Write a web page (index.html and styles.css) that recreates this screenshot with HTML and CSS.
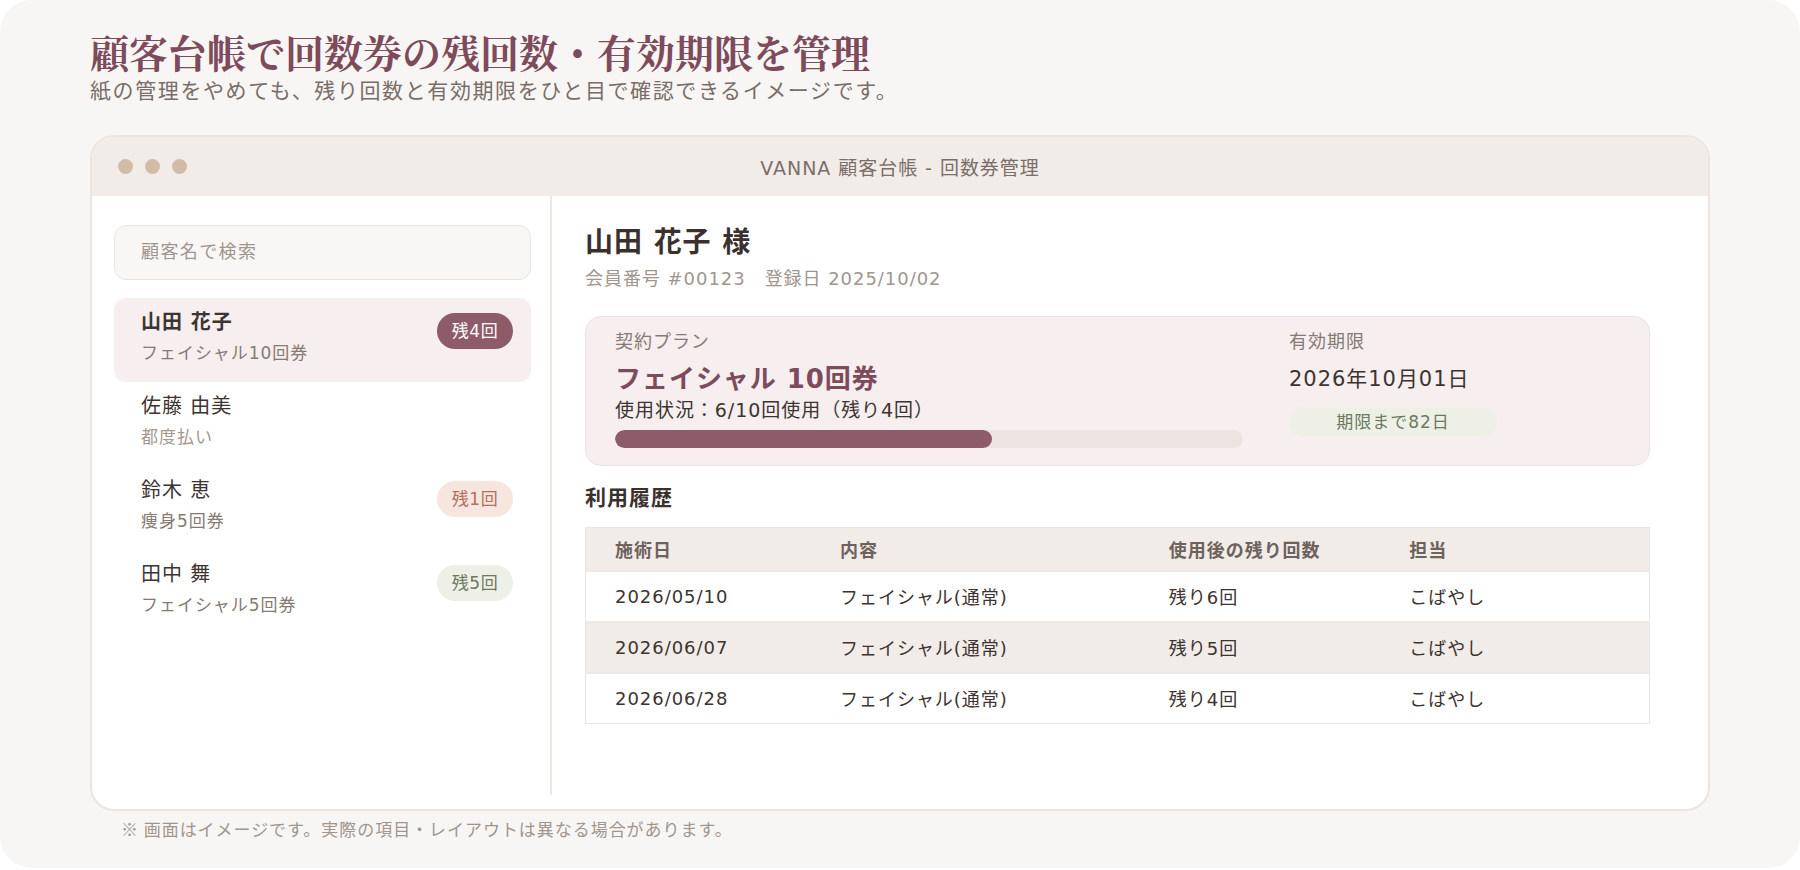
FILE: index.html
```html
<!DOCTYPE html>
<html lang="ja">
<head>
    <meta charset="UTF-8">
    <meta name="viewport" content="width=device-width, initial-scale=1.0">
    <title>顧客台帳 回数券管理</title>
    <link rel="stylesheet" href="styles.css">
</head>
<body>
    <div class="page">
        <h1 class="title">顧客台帳で回数券の残回数・有効期限を管理</h1>
        <p class="lead">紙の管理をやめても、残り回数と有効期限をひと目で確認できるイメージです。</p>

        <div class="window">
            <div class="titlebar">
                <div class="dots"><span></span><span></span><span></span></div>
                <div class="wintitle">VANNA 顧客台帳 - 回数券管理</div>
            </div>

            <div class="winbody">
                <aside class="sidebar">
                    <div class="search">顧客名で検索</div>
                    <ul class="clients">
                        <li class="current">
                            <div class="info">
                                <div class="name">山田 花子</div>
                                <div class="plan">フェイシャル10回券</div>
                            </div>
                            <span class="badge badge-main">残4回</span>
                        </li>
                        <li>
                            <div class="info">
                                <div class="name">佐藤 由美</div>
                                <div class="plan plan-light">都度払い</div>
                            </div>
                        </li>
                        <li>
                            <div class="info">
                                <div class="name">鈴木 恵</div>
                                <div class="plan">痩身5回券</div>
                            </div>
                            <span class="badge badge-warn">残1回</span>
                        </li>
                        <li>
                            <div class="info">
                                <div class="name">田中 舞</div>
                                <div class="plan">フェイシャル5回券</div>
                            </div>
                            <span class="badge badge-ok">残5回</span>
                        </li>
                    </ul>
                </aside>

                <main class="detail">
                    <h2 class="customer">山田 花子 様</h2>
                    <div class="meta"><span>会員番号 #00123</span><span>登録日 2025/10/02</span></div>

                    <div class="card">
                        <div class="card-col">
                            <div class="label">契約プラン</div>
                            <div class="plan-name">フェイシャル 10回券</div>
                            <div class="usage">使用状況：6/10回使用（残り4回）</div>
                            <div class="bar"><div class="bar-fill" style="width: 60%"></div></div>
                        </div>
                        <div class="card-col">
                            <div class="label">有効期限</div>
                            <div class="expire">2026年10月01日</div>
                            <div class="days">期限まで82日</div>
                        </div>
                    </div>

                    <h3 class="section">利用履歴</h3>
                    <table class="history">
                        <thead>
                            <tr>
                                <th class="c-date">施術日</th>
                                <th class="c-menu">内容</th>
                                <th class="c-left">使用後の残り回数</th>
                                <th>担当</th>
                            </tr>
                        </thead>
                        <tbody>
                            <tr>
                                <td>2026/05/10</td>
                                <td>フェイシャル(通常)</td>
                                <td>残り6回</td>
                                <td>こばやし</td>
                            </tr>
                            <tr>
                                <td>2026/06/07</td>
                                <td>フェイシャル(通常)</td>
                                <td>残り5回</td>
                                <td>こばやし</td>
                            </tr>
                            <tr>
                                <td>2026/06/28</td>
                                <td>フェイシャル(通常)</td>
                                <td>残り4回</td>
                                <td>こばやし</td>
                            </tr>
                        </tbody>
                    </table>
                </main>
            </div>
        </div>

        <p class="note">※ 画面はイメージです。実際の項目・レイアウトは異なる場合があります。</p>
    </div>
</body>
</html>
```

FILE: styles.css
```css
* {
    padding: 0;
    margin: 0;
    box-sizing: border-box;
}

body {
    background: #fff;
    font-family: "DejaVu Sans", "Noto Sans CJK JP", sans-serif;
    letter-spacing: 0.06em;
    color: #3d3431;
}

ul {
    list-style: none;
}

.page {
    width: 1800px;
    height: 868px;
    background: #f8f6f4;
    border-radius: 32px;
    padding: 25px 90px 0 90px;
}

.title {
    font-family: "Noto Serif CJK JP", "Noto Sans CJK JP", serif;
    font-size: 39px;
    line-height: 52px;
    font-weight: 700;
    letter-spacing: 0;
    color: #7d4b5c;
}

.lead {
    font-size: 21px;
    letter-spacing: 1.6px;
    line-height: 28px;
    color: #786d68;
}

/* window */
.window {
    margin-top: 30px;
    height: 676px;
    background: #fff;
    border: 2px solid #ece4de;
    border-radius: 24px;
    overflow: hidden;
    display: flex;
    flex-direction: column;
}

.titlebar {
    height: 59px;
    flex: none;
    background: #f2ece8;
    display: grid;
    grid-template-columns: 1fr auto 1fr;
    align-items: center;
    padding: 0 26px;
}

.dots {
    display: flex;
    gap: 12px;
}

.dots span {
    width: 15px;
    height: 15px;
    border-radius: 50%;
    background: #d2bca7;
}

.wintitle {
    font-size: 19px;
    color: #7a6e69;
}

.winbody {
    flex: 1;
    display: flex;
    padding-bottom: 14px;
}

/* sidebar */
.sidebar {
    width: 460px;
    flex: none;
    border-right: 2px solid #eee7e1;
    padding: 29px 19px 0 22px;
}

.search {
    height: 55px;
    border: 1.5px solid #ece4de;
    border-radius: 12px;
    background: #f9f7f5;
    padding-left: 26px;
    font-size: 18px;
    letter-spacing: 1.4px;
    line-height: 52px;
    color: #a0958f;
}

.clients {
    margin-top: 18px;
}

.clients li {
    height: 84px;
    border-radius: 12px;
    padding: 10px 18px 0 27px;
    display: flex;
    justify-content: space-between;
    align-items: flex-start;
}

.clients li.current {
    background: #f6eeef;
}

.clients .name {
    font-size: 20px;
    line-height: 28px;
    color: #3d3431;
}

.clients li.current .name {
    font-weight: 700;
}

.clients .plan {
    font-size: 17px;
    line-height: 24px;
    margin-top: 5px;
    color: #857a74;
}

.clients .plan-light {
    color: #a3978f;
}

.badge {
    margin-top: 5px;
    height: 36px;
    width: 76px;
    border-radius: 18px;
    font-size: 17px;
    letter-spacing: 0.5px;
    line-height: 36px;
    text-align: center;
}

.badge-main {
    background: #8d5b69;
    color: #fff;
}

.badge-warn {
    background: #f7e6df;
    color: #b3705f;
}

.badge-ok {
    background: #eef0e8;
    color: #6c7a5d;
}

/* detail */
.detail {
    flex: 1;
    padding: 27px 58px 0 33px;
}

.customer {
    font-size: 28px;
    line-height: 40px;
    font-weight: 700;
    color: #3a312e;
}

.meta {
    margin-top: 3px;
    font-size: 18px;
    line-height: 26px;
    color: #a0958f;
}

.meta span + span {
    margin-left: 19px;
}

.card {
    margin-top: 24px;
    height: 150px;
    background: #f6eeef;
    border: 1.5px solid #eee3e2;
    border-radius: 16px;
    padding: 13px 30px 0 29px;
    display: grid;
    grid-template-columns: 1fr 330px;
    gap: 46px;
}

.label {
    font-size: 18px;
    line-height: 24px;
    color: #857a74;
}

.plan-name {
    margin-top: 7px;
    font-size: 26px;
    line-height: 36px;
    font-weight: 700;
    color: #7d4b5c;
}

.usage {
    font-size: 19px;
    line-height: 26px;
    color: #3d3431;
}

.bar {
    margin-top: 7px;
    height: 18px;
    border-radius: 9px;
    background: #ede3e0;
    overflow: hidden;
}

.bar-fill {
    height: 100%;
    border-radius: 9px;
    background: #8d5b69;
}

.expire {
    margin-top: 7px;
    font-size: 21px;
    line-height: 36px;
    color: #3d3431;
}

.days {
    margin-top: 10px;
    width: 208px;
    height: 30px;
    border-radius: 15px;
    background: #eef0e8;
    color: #6c7a5d;
    font-size: 17px;
    line-height: 30px;
    text-align: center;
}

.section {
    margin-top: 18px;
    font-size: 21px;
    line-height: 28px;
    font-weight: 700;
    color: #3a312e;
}

.history {
    margin-top: 15px;
    width: 100%;
    border-collapse: collapse;
    border: 1.5px solid #ece5df;
    font-size: 18px;
    color: #3d3431;
}

.history th {
    height: 43px;
    background: #f2ece8;
    text-align: left;
    font-weight: 700;
    color: #6e625c;
    padding-left: 29px;
}

.history td {
    height: 51px;
    padding-left: 29px;
    border-top: 2px solid #efe9e5;
}

.history tbody tr:nth-child(2) td {
    background: #f2ece8;
}

.history .c-date {
    width: 21.2%;
}

.history .c-menu {
    width: 30.9%;
}

.history .c-left {
    width: 22.6%;
}

.note {
    margin-top: 7px;
    padding-left: 31px;
    font-family: "Noto Sans CJK JP", sans-serif;
    font-size: 17px;
    line-height: 22px;
    color: #a0958f;
}
```
